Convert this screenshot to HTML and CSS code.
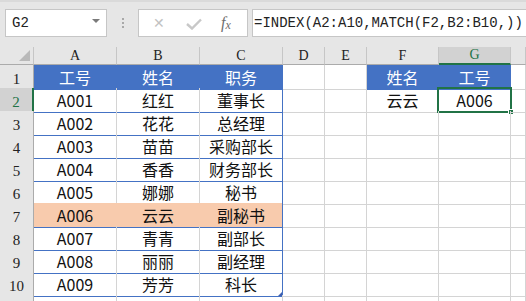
FILE: index.html
```html
<!DOCTYPE html>
<html lang="zh-CN">
<head>
    <meta charset="UTF-8">
    <title>INDEX MATCH</title>
    <link rel="stylesheet" href="styles.css">
</head>
<body>
    <div class="toolbar">
        <div class="namebox">
            <span>G2</span>
            <span class="caret"></span>
        </div>
        <div class="dots"><i></i><i></i><i></i></div>
        <div class="fxbox">
            <span class="cancel">&#x2715;</span>
            <span class="enter">
                <svg width="16" height="12" viewBox="0 0 16 12"><path d="M1 6 L6 10.5 L15 1.5" fill="none" stroke="#c8c8c8" stroke-width="2.4"/></svg>
            </span>
            <span class="fx">f<sub>x</sub></span>
        </div>
        <div class="formula">=INDEX(A2:A10,MATCH(F2,B2:B10,))</div>
    </div>

    <div class="sheet">
        <div class="row colhead">
            <div class="corner"><span class="tri"></span></div>
            <div>A</div><div>B</div><div>C</div><div>D</div><div>E</div><div>F</div>
            <div class="active">G</div>
            <div></div>
        </div>

        <div class="row">
            <div class="num">1</div>
            <div class="c hd">工号</div><div class="c hd">姓名</div><div class="c hd end">职务</div>
            <div class="c"></div><div class="c"></div>
            <div class="c hd">姓名</div><div class="c hd">工号</div><div class="c"></div>
        </div>
        <div class="row">
            <div class="num active">2</div>
            <div class="c t">A001</div><div class="c t">红红</div><div class="c t end">董事长</div>
            <div class="c"></div><div class="c"></div>
            <div class="c">云云</div>
            <div class="c sel">A006<span class="selbox"><span class="handle"></span></span></div>
            <div class="c"></div>
        </div>
        <div class="row">
            <div class="num">3</div>
            <div class="c t">A002</div><div class="c t">花花</div><div class="c t end">总经理</div>
            <div class="c"></div><div class="c"></div><div class="c"></div><div class="c"></div><div class="c"></div>
        </div>
        <div class="row">
            <div class="num">4</div>
            <div class="c t">A003</div><div class="c t">苗苗</div><div class="c t end">采购部长</div>
            <div class="c"></div><div class="c"></div><div class="c"></div><div class="c"></div><div class="c"></div>
        </div>
        <div class="row">
            <div class="num">5</div>
            <div class="c t">A004</div><div class="c t">香香</div><div class="c t end">财务部长</div>
            <div class="c"></div><div class="c"></div><div class="c"></div><div class="c"></div><div class="c"></div>
        </div>
        <div class="row">
            <div class="num">6</div>
            <div class="c t">A005</div><div class="c t">娜娜</div><div class="c t end">秘书</div>
            <div class="c"></div><div class="c"></div><div class="c"></div><div class="c"></div><div class="c"></div>
        </div>
        <div class="row">
            <div class="num">7</div>
            <div class="c t hit">A006</div><div class="c t hit">云云</div><div class="c t hit end">副秘书</div>
            <div class="c"></div><div class="c"></div><div class="c"></div><div class="c"></div><div class="c"></div>
        </div>
        <div class="row">
            <div class="num">8</div>
            <div class="c t">A007</div><div class="c t">青青</div><div class="c t end">副部长</div>
            <div class="c"></div><div class="c"></div><div class="c"></div><div class="c"></div><div class="c"></div>
        </div>
        <div class="row">
            <div class="num">9</div>
            <div class="c t">A008</div><div class="c t">丽丽</div><div class="c t end">副经理</div>
            <div class="c"></div><div class="c"></div><div class="c"></div><div class="c"></div><div class="c"></div>
        </div>
        <div class="row">
            <div class="num">10</div>
            <div class="c t">A009</div><div class="c t">芳芳</div><div class="c t end last">科长<span class="resize"></span></div>
            <div class="c"></div><div class="c"></div><div class="c"></div><div class="c"></div><div class="c"></div>
        </div>
        <div class="row tail">
            <div class="num"></div>
            <div class="c"></div><div class="c"></div><div class="c"></div>
            <div class="c"></div><div class="c"></div><div class="c"></div><div class="c"></div><div class="c"></div>
        </div>
    </div>
</body>
</html>
```

FILE: styles.css
```css
* {
    margin: 0;
    padding: 0;
    box-sizing: border-box;
}

body {
    width: 526px;
    height: 301px;
    overflow: hidden;
    background: #fff;
    font-family: "Noto Sans CJK SC", sans-serif;
}

.toolbar {
    height: 47px;
    background: #e6e6e6;
    border-top: 2px solid #dadada;
    display: flex;
    align-items: flex-start;
    padding: 7px 0 0 5px;
}

.namebox {
    width: 102px;
    height: 28px;
    background: #fff;
    border: 1px solid #c6c6c6;
    display: flex;
    align-items: center;
    justify-content: space-between;
    padding: 0 6px 0 6px;
    font-family: "Liberation Mono", monospace;
    font-size: 14px;
    color: #222;
}

.caret {
    width: 0;
    height: 0;
    border-left: 4px solid transparent;
    border-right: 4px solid transparent;
    border-top: 4px solid #7a7a7a;
    margin-bottom: 4px;
}

.dots {
    width: 31px;
    height: 28px;
    display: flex;
    flex-direction: column;
    align-items: center;
    justify-content: center;
    gap: 2px;
}

.dots i {
    width: 2px;
    height: 2px;
    background: #a8a8a8;
}

.fxbox {
    width: 110px;
    height: 28px;
    background: #fff;
    border: 1px solid #c6c6c6;
    display: flex;
    align-items: center;
    padding-left: 14px;
}

.cancel {
    color: #c2c2c2;
    font-family: "DejaVu Sans", sans-serif;
    font-size: 14px;
    width: 33px;
}

.enter {
    width: 35px;
    display: flex;
    padding-top: 2px;
}

.fx {
    font-family: "Liberation Serif", serif;
    font-style: italic;
    font-size: 16px;
    color: #6e6e6e;
}

.fx sub {
    font-size: 12px;
    vertical-align: baseline;
    position: relative;
    top: 1px;
}

.formula {
    flex: 1;
    margin-left: 4px;
    height: 28px;
    background: #fff;
    border: 1px solid #c6c6c6;
    border-right: none;
    font-family: "Liberation Mono", monospace;
    font-size: 14px;
    line-height: 26px;
    padding-left: 1px;
    color: #222;
}

.row {
    display: grid;
    grid-template-columns: 34px 83px 83px 83px 42px 42px 72px 72px 1fr;
    height: 23px;
}

.row.tail {
    height: 7px;
}

.colhead {
    height: 18px;
    background: #e6e6e6;
    font-family: "Liberation Serif", serif;
    font-size: 14px;
    color: #222;
}

.colhead div {
    border-right: 1px solid #c6c6c6;
    border-bottom: 1px solid #ababab;
    display: flex;
    align-items: center;
    justify-content: center;
    line-height: 1;
}

.colhead .active {
    background: #d2d2d2;
    color: #217346;
    border-bottom: 2px solid #217346;
}

.corner {
    position: relative;
}

.tri {
    position: absolute;
    right: 3px;
    bottom: 3px;
    width: 0;
    height: 0;
    border-left: 11px solid transparent;
    border-bottom: 11px solid #b9b9b9;
}

.num {
    background: #e6e6e6;
    border-right: 1px solid #ababab;
    border-bottom: 1px solid #c6c6c6;
    font-family: "Liberation Serif", serif;
    font-size: 15px;
    color: #222;
    display: flex;
    align-items: flex-end;
    justify-content: center;
    padding-bottom: 1px;
}

.num.active {
    background: #d2d2d2;
    color: #217346;
    border-right: 2px solid #217346;
}

.c {
    border-right: 1px solid #d4d4d4;
    border-bottom: 1px solid #d4d4d4;
    display: flex;
    align-items: center;
    justify-content: center;
    font-size: 16px;
    color: #111;
    position: relative;
}

.t {
    border-bottom-color: #4472c4;
}

.hd {
    background: #4472c4;
    border-color: #4472c4;
    color: #fff;
}

.hit {
    background: #f8cbad;
    border-right-color: #f8cbad;
}

.end {
    border-right-color: #4472c4;
}

.selbox {
    position: absolute;
    left: -2px;
    top: -1px;
    right: -2px;
    bottom: -1px;
    border: 2px solid #217346;
}

.handle {
    position: absolute;
    right: -4px;
    bottom: -4px;
    width: 6px;
    height: 6px;
    background: #217346;
    border: 1px solid #fff;
}

.resize {
    position: absolute;
    right: 0;
    bottom: 0;
    width: 0;
    height: 0;
    border-left: 4px solid transparent;
    border-bottom: 4px solid #3f5fb0;
}
```
